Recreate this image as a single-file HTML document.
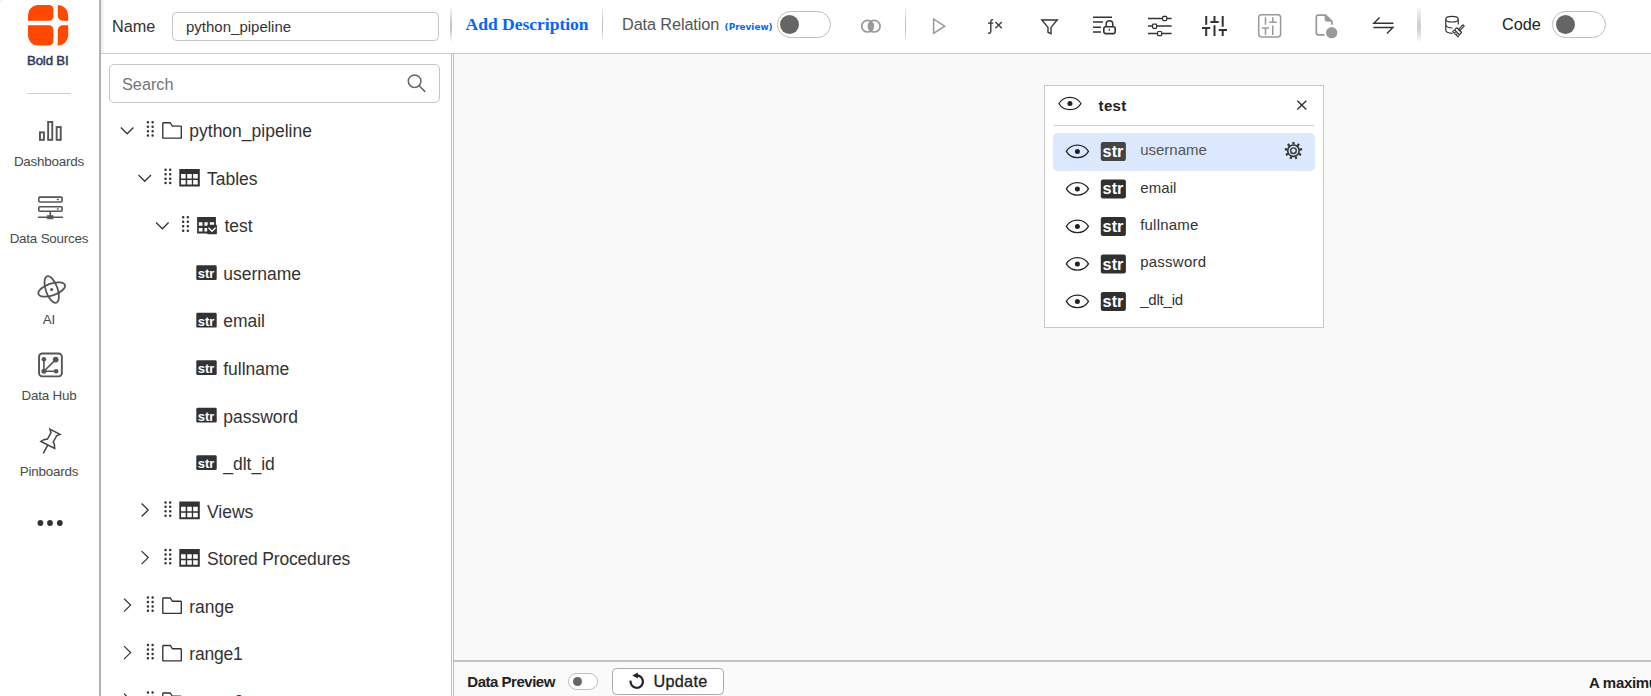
<!DOCTYPE html>
<html lang="en">
<head>
<meta charset="utf-8">
<title>Bold BI - Data Source Designer</title>
<style>
html,body{margin:0;padding:0;}
body{width:1651px;height:696px;overflow:hidden;position:relative;background:#fff;font-family:"Liberation Sans",sans-serif;color:#333;}
.abs{position:absolute;}
.t{position:absolute;white-space:nowrap;line-height:1;}
svg{position:absolute;overflow:visible;}
/* sidebar */
#sidebar{left:0;top:0;width:99px;height:696px;background:#fff;}
#sideborder{left:99px;top:0;width:2px;height:696px;background:#b2b2b2;}
#sideshadow{left:101px;top:0;width:4px;height:696px;background:linear-gradient(to right,#ececec,#fff);}
.navlbl{font-size:13.4px;color:#4a4a4a;text-align:center;width:98px;left:0;letter-spacing:-0.2px;}
/* toolbar */
#toolbar{left:101px;top:0;width:1550px;height:53px;}
#tbline{left:101px;top:53px;width:1550px;height:1px;background:#c9c9c9;}
.vdiv{width:1px;top:8px;height:35px;background:linear-gradient(to bottom,rgba(170,170,170,0.15),#bdbdbd 45%,#bdbdbd 60%,rgba(170,170,170,0));}
.toggle{border:1px solid #bdbdbd;border-radius:14px;background:#fff;box-sizing:border-box;}
.knob{border-radius:50%;background:#656565;}
/* tree */
#tree{left:101px;top:54px;width:350px;height:642px;background:#fff;overflow:hidden;}
.trow{font-size:17.5px;color:#333;}
.strb{font-size:13px;font-weight:bold;color:#fff;}
.cstr{font-size:16.25px;font-weight:bold;color:#fff;}
/* canvas */
#canvas{left:454px;top:54px;width:1197px;height:606px;background:#f9f9f9;}
#bottom{left:454px;top:662px;width:1197px;height:34px;background:#fafafa;}
</style>
</head>
<body>
<!-- ============ SIDEBAR ============ -->
<div id="sidebar" class="abs"></div>
<div id="sideborder" class="abs"></div>
<div id="sideshadow" class="abs"></div>
<div class="abs" style="left:0;top:0;width:4px;height:4px;background:linear-gradient(135deg,rgba(0,0,0,0) 12%,rgba(0,0,0,0.08) 32%,rgba(0,0,0,0) 52%);"></div>
<svg style="left:27.7px;top:5px;" width="41" height="41" viewBox="0 0 41 41">
 <g fill="#ff4800">
  <path d="M0,15.7 V10 A10,10 0 0 1 10,0 H21 A4.4,4.4 0 0 1 25.4,4.4 V11.3 A4.4,4.4 0 0 1 21,15.7 Z"/>
  <path d="M0,20.3 H21 A4.4,4.4 0 0 1 25.4,24.7 V36.2 A4.4,4.4 0 0 1 21,40.6 H10 A10,10 0 0 1 0,30.6 Z"/>
  <path d="M29.8,0 A10.4,10.4 0 0 1 40.2,10.4 V15.7 H34.8 A5,5 0 0 1 29.8,10.7 Z"/>
  <path d="M40.2,20.3 V30.2 A10.4,10.4 0 0 1 29.8,40.6 V25.3 A5,5 0 0 1 34.8,20.3 Z"/>
 </g>
</svg>
<div class="t" id="brand" style="left:0;width:95.5px;text-align:center;top:54px;font-size:13.2px;color:#2c3a5c;-webkit-text-stroke:0.5px #2c3a5c;letter-spacing:-0.15px;">Bold BI</div>
<div class="abs" style="left:27px;top:93px;width:44px;height:1px;background:#cfcfcf;"></div>

<svg style="left:0;top:0;" width="99" height="696" viewBox="0 0 99 696" fill="none" stroke="#555" stroke-width="1.8" stroke-linejoin="round" stroke-linecap="round">
 <!-- Dashboards -->
 <g stroke-width="1.9" stroke-linejoin="miter">
 <rect x="39.95" y="132.35" width="3.95" height="7.5"/>
 <rect x="48.15" y="121.95" width="4.1" height="17.9"/>
 <rect x="56.65" y="127.05" width="4.1" height="12.8"/>
 </g>
 <!-- Data Sources -->
 <g stroke-width="1.6">
 <rect x="38.8" y="197.1" width="23.3" height="4.9" rx="1"/>
 <rect x="38.8" y="206.8" width="23.3" height="4.4" rx="1"/>
 <path d="M38.5,217.2 H62.4 M50.3,212 V215"/>
 <rect x="47.6" y="215.6" width="5.4" height="3.2" fill="#555" stroke-width="0.8"/>
 <path d="M57.4,199.5 h0.8 M57.4,209 h0.8" stroke-width="1.4"/>
 </g>
 <!-- AI -->
 <g transform="translate(51.7,289.5)">
  <ellipse rx="14" ry="5.9" transform="rotate(-19)"/>
  <ellipse rx="14" ry="5.9" transform="rotate(71)"/>
  <circle r="1.6" fill="#555" stroke="none"/>
 </g>
 <!-- Data Hub -->
 <rect x="39.05" y="353.55" width="22.8" height="22.8" rx="3.2" stroke-width="1.9"/>
 <path d="M43.9,359.3 V371.2 H56.1 M43.9,371.2 L55.7,359.6" stroke-width="1.6"/>
 <g fill="#555" stroke="none"><circle cx="43.9" cy="359.3" r="2.3"/><circle cx="43.9" cy="371.2" r="2.5"/><circle cx="56.1" cy="371.3" r="2.3"/><circle cx="55.7" cy="359.6" r="2.9"/></g>
 <!-- Pinboards -->
 <path d="M49.9,429.1 L60,434.4 L56.8,435.5 L53.2,442.2 L54.3,443.8 L54.7,448.5 L40.9,441.4 L43.9,439.7 L47.5,439 L51,432.7 Z M47.7,445.2 L43.6,452.8" stroke-width="1.5" stroke="#444" stroke-linejoin="miter"/>
 <g fill="#333" stroke="none"><circle cx="40.4" cy="523" r="2.9"/><circle cx="50" cy="523" r="2.9"/><circle cx="59.8" cy="523" r="2.9"/></g>
</svg>
<div class="t navlbl" style="top:155px;">Dashboards</div>
<div class="t navlbl" style="top:232px;">Data Sources</div>
<div class="t navlbl" style="top:313px;">AI</div>
<div class="t navlbl" style="top:389px;">Data Hub</div>
<div class="t navlbl" style="top:465px;">Pinboards</div>


<!-- ============ TOOLBAR ============ -->
<div id="tbline" class="abs"></div>
<div class="t" id="lblName" style="left:112px;top:18px;font-size:16.25px;color:#333;">Name</div>
<div class="abs" style="left:172px;top:12px;width:267px;height:29px;box-sizing:border-box;border:1px solid #c6c6c6;border-radius:4.5px;background:#fff;"></div>
<div class="t" id="inpName" style="left:186px;top:19px;font-size:15px;color:#333;">python_pipeline</div>
<div class="abs vdiv" style="left:450px;width:2px;opacity:.85;"></div>
<div class="t" id="addDesc" style="left:465.6px;top:16px;font-family:'Liberation Serif',serif;font-weight:bold;font-size:17.5px;color:#0565ff;">Add Description</div>
<div class="abs vdiv" style="left:602px;"></div>
<div class="t" id="dataRel" style="left:622px;top:16px;font-size:16.25px;color:#555;letter-spacing:-0.1px;">Data Relation</div>
<div class="t" id="preview" style="left:724.6px;top:22.8px;font-family:'DejaVu Sans','Liberation Sans',sans-serif;font-weight:bold;font-size:8.9px;color:#0565ff;">(Preview)</div>
<div class="abs toggle" style="left:777px;top:11px;width:54px;height:27px;"></div>
<div class="abs knob" style="left:780px;top:15px;width:19px;height:19px;"></div>
<div class="abs vdiv" style="left:904.5px;"></div>
<div class="abs vdiv" style="left:1417px;width:4px;opacity:.7;"></div>
<div class="t" id="lblCode" style="left:1502px;top:15.5px;font-size:16.25px;color:#222;">Code</div>
<div class="abs toggle" style="left:1552px;top:11px;width:54px;height:27px;"></div>
<div class="abs knob" style="left:1555.5px;top:15px;width:19px;height:19px;"></div>

<svg style="left:840px;top:0;" width="811" height="53" viewBox="840 0 811 53" fill="none" stroke-linecap="butt" stroke-linejoin="miter">
 <!-- venn -->
 <g stroke="#999" stroke-width="1.4">
  <path d="M870.9,21.4 A5.85,5.85 0 0 1 870.9,31 A5.85,5.85 0 0 1 870.9,21.4 Z" fill="#999" stroke="none"/>
  <circle cx="867.55" cy="26.2" r="5.85" stroke-width="1.6"/><circle cx="874.25" cy="26.2" r="5.85" stroke-width="1.6"/>
 </g>
 <!-- play -->
 <path d="M933.6,19.2 V33.3 L944.7,26.2 Z" stroke="#999" stroke-width="1.5"/>
 <!-- fx -->
 <g stroke="#444" stroke-width="1.5">
  <path d="M993.2,19.9 Q990.9,19.2 990.8,22 V31 Q990.7,33.6 988,33.2"/>
  <path d="M988,23.1 H993.2"/>
  <path d="M995.4,22 L1001.8,28.2 M1001.8,22 L995.4,28.2"/>
 </g>
 <!-- filter -->
 <path d="M1041.8,20 H1057.2 L1051,27.4 V33.6 L1048,32.3 V27.4 Z" stroke="#333" stroke-width="1.4"/>
 <!-- list lock -->
 <g stroke="#333" stroke-width="1.5">
  <path d="M1093,17.2 H1112 M1093,22.1 H1103 M1093,27.2 H1101 M1093,32 H1101"/>
  <rect x="1103.8" y="26.8" width="11.4" height="6.8" rx="2" stroke-width="1.6" fill="#fff"/>
  <path d="M1106.2,26.6 V24.2 A3.3,3.4 0 0 1 1112.8,24.2 V26.6" stroke-width="1.5"/>
  <path d="M1109.3,28.8 V30.8" stroke-width="1.3"/>
 </g>
 <!-- sliders -->
 <g stroke="#333" stroke-width="1.5">
  <path d="M1148,18.6 H1171.6 M1148,26.1 H1171.6 M1148,33.6 H1171.6"/>
  <g fill="#fff" stroke-width="1.2"><rect x="1162.7" y="16.4" width="4" height="4.2" rx="0.8"/><rect x="1152.6" y="24.1" width="4" height="4.2" rx="0.8"/><rect x="1157.6" y="31.5" width="4" height="4.2" rx="0.8"/></g>
 </g>
 <!-- vertical sliders -->
 <g stroke="#333" stroke-width="2">
  <path d="M1206.2,16 V24.7 M1206.2,28 V36 M1202,28 H1210.2"/>
  <path d="M1214.5,16 V22 M1210.3,22 H1218.7 M1214.5,25.2 V36"/>
  <path d="M1222.7,16 V26.7 M1222.7,30 V36 M1218.7,30 H1227"/>
 </g>
 <!-- boxed sliders (disabled) -->
 <g stroke="#999" stroke-width="1.5">
  <rect x="1258.7" y="14.8" width="21.9" height="22.1" rx="2.8"/>
  <path d="M1265.5,17.3 V24.7 M1265.5,28 V35 M1262,28 H1269"/>
  <path d="M1272.8,17.3 V22.3 M1269.3,22.3 H1276.6 M1272.8,25.6 V35"/>
 </g>
 <!-- file with dot -->
 <g stroke="#999" stroke-width="1.7">
  <path d="M1324.6,34.8 H1318.3 A2,2 0 0 1 1316.3,32.8 V17.2 A2,2 0 0 1 1318.3,15.2 H1325.6 L1331.9,21.4 V24.8"/>
  <path d="M1325,15.4 V19.4 A1.8,1.8 0 0 0 1326.8,21.2 H1331.6 Z" fill="#999" stroke-width="0.8"/>
  <circle cx="1331.65" cy="32.65" r="5.65" fill="#999" stroke="none"/>
 </g>
 <!-- swap -->
 <g stroke="#333" stroke-width="1.4">
  <path d="M1379.6,17.4 L1373.8,23.3 H1393.4"/>
  <path d="M1373.4,27.45 H1392.9 L1387,33.4"/>
 </g>
 <!-- db brush -->
 <g stroke="#333" stroke-width="1.2">
  <ellipse cx="1452" cy="19.2" rx="6.2" ry="2.8"/>
  <path d="M1445.8,19.2 V30.6 C1445.8,32.2 1449,33.2 1452.6,33.3"/>
  <path d="M1445.8,25 C1446,26.6 1449,27.8 1452.6,28"/>
  <path d="M1458.2,19.2 V24.6"/>
  <g transform="translate(1459.2,30) rotate(-46)">
   <rect x="-0.2" y="-0.9" width="6.6" height="1.8" rx="0.6"/>
   <rect x="-3.2" y="-3.4" width="3.2" height="6.8" rx="0.5"/>
   <path d="M-3.2,-3.4 L-5.6,-3.6 L-5.8,3.9 L-3.2,3.4 M-5.6,-1.2 H-3.6 M-5.6,1.2 H-3.6" stroke-width="1"/>
  </g>
 </g>
</svg>


<!-- ============ TREE ============ -->
<div id="tree" class="abs"></div>
<div class="abs" style="left:109px;top:64px;width:331px;height:39px;box-sizing:border-box;border:1px solid #c6c6c6;border-radius:5px;background:#fff;"></div>
<div class="t" id="search" style="left:122px;top:75.5px;font-size:16.25px;color:#757575;">Search</div>
<svg style="left:400px;top:70px;" width="30" height="26" viewBox="400 70 30 26" fill="none" stroke="#666" stroke-width="1.5"><circle cx="414.6" cy="81.2" r="6.3"/><path d="M419.2,85.8 L424.8,91.4" stroke-linecap="round"/></svg>
<div class="abs" style="left:101px;top:54px;width:350px;height:642px;overflow:hidden;">
<svg style="left:-101px;top:-54px;" width="451" height="750" viewBox="0 0 451 750">
<path d="M120.9,127.5 l6.25,6.25 l6.25,-6.25" stroke="#333" stroke-width="1.25" fill="none"/>
<path d="M146.7,122.3 a1.25,1.25 0 1 0 2.5,0 a1.25,1.25 0 1 0 -2.5,0 M151.36,122.3 a1.25,1.25 0 1 0 2.5,0 a1.25,1.25 0 1 0 -2.5,0 M146.7,126.7 a1.25,1.25 0 1 0 2.5,0 a1.25,1.25 0 1 0 -2.5,0 M151.36,126.7 a1.25,1.25 0 1 0 2.5,0 a1.25,1.25 0 1 0 -2.5,0 M146.7,131.2 a1.25,1.25 0 1 0 2.5,0 a1.25,1.25 0 1 0 -2.5,0 M151.36,131.2 a1.25,1.25 0 1 0 2.5,0 a1.25,1.25 0 1 0 -2.5,0 M146.7,135.6 a1.25,1.25 0 1 0 2.5,0 a1.25,1.25 0 1 0 -2.5,0 M151.36,135.6 a1.25,1.25 0 1 0 2.5,0 a1.25,1.25 0 1 0 -2.5,0" fill="#333"/>
<path d="M162.8,138.15 V123.45 q0,-0.7 0.7,-0.7 h6.8 l2,3.3 h8.2 q0.8,0 0.8,0.8 V138.15 Z" stroke="#333" stroke-width="1.35" fill="none" stroke-linejoin="round"/>
<path d="M138.5,175.02 l6.25,6.25 l6.25,-6.25" stroke="#333" stroke-width="1.25" fill="none"/>
<path d="M164.3,169.82 a1.25,1.25 0 1 0 2.5,0 a1.25,1.25 0 1 0 -2.5,0 M168.96,169.82 a1.25,1.25 0 1 0 2.5,0 a1.25,1.25 0 1 0 -2.5,0 M164.3,174.22 a1.25,1.25 0 1 0 2.5,0 a1.25,1.25 0 1 0 -2.5,0 M168.96,174.22 a1.25,1.25 0 1 0 2.5,0 a1.25,1.25 0 1 0 -2.5,0 M164.3,178.72 a1.25,1.25 0 1 0 2.5,0 a1.25,1.25 0 1 0 -2.5,0 M168.96,178.72 a1.25,1.25 0 1 0 2.5,0 a1.25,1.25 0 1 0 -2.5,0 M164.3,183.12 a1.25,1.25 0 1 0 2.5,0 a1.25,1.25 0 1 0 -2.5,0 M168.96,183.12 a1.25,1.25 0 1 0 2.5,0 a1.25,1.25 0 1 0 -2.5,0" fill="#333"/>
<path d="M179.3,168.92 h20.5 v17.6 h-20.5 Z M181.05,174.07 v4.5 h4.6 v-4.5 Z M187.2,174.07 v4.5 h4.6 v-4.5 Z M193.15,174.07 v4.5 h4.6 v-4.5 Z M181.05,180.12 v4.5 h4.6 v-4.5 Z M187.2,180.12 v4.5 h4.6 v-4.5 Z M193.15,180.12 v4.5 h4.6 v-4.5 Z" fill="#333" fill-rule="evenodd"/>
<path d="M156.1,222.54 l6.25,6.25 l6.25,-6.25" stroke="#333" stroke-width="1.25" fill="none"/>
<path d="M181.9,217.34 a1.25,1.25 0 1 0 2.5,0 a1.25,1.25 0 1 0 -2.5,0 M186.56,217.34 a1.25,1.25 0 1 0 2.5,0 a1.25,1.25 0 1 0 -2.5,0 M181.9,221.74 a1.25,1.25 0 1 0 2.5,0 a1.25,1.25 0 1 0 -2.5,0 M186.56,221.74 a1.25,1.25 0 1 0 2.5,0 a1.25,1.25 0 1 0 -2.5,0 M181.9,226.24 a1.25,1.25 0 1 0 2.5,0 a1.25,1.25 0 1 0 -2.5,0 M186.56,226.24 a1.25,1.25 0 1 0 2.5,0 a1.25,1.25 0 1 0 -2.5,0 M181.9,230.64 a1.25,1.25 0 1 0 2.5,0 a1.25,1.25 0 1 0 -2.5,0 M186.56,230.64 a1.25,1.25 0 1 0 2.5,0 a1.25,1.25 0 1 0 -2.5,0" fill="#333"/>
<path d="M197.1,216.99 h18.8 v16.4 h-18.8 Z M198.8,222.19 v3.6 h3.7 v-3.6 Z M204.4,222.19 v3.6 h3.3 v-3.6 Z M209.8,222.19 v3.6 h4.3 v-3.6 Z M198.8,227.99 v3.4 h3.7 v-3.4 Z M204.4,227.99 v3.4 h3.3 v-3.4 Z M209.8,227.99 v3.4 h4.3 v-3.4 Z" fill="#333" fill-rule="evenodd"/>
<rect x="207.2" y="224.84" width="9.7" height="9.5" rx="0.8" fill="#333"/>
<path d="M208.5,227.84 l3.5,3.4 l3.6,-3.4" stroke="#fff" stroke-width="1.3" fill="none"/>
<rect x="196.3" y="265.21" width="20.4" height="14.8" rx="1.3" fill="#333"/>
<rect x="196.3" y="312.73" width="20.4" height="14.8" rx="1.3" fill="#333"/>
<rect x="196.3" y="360.25" width="20.4" height="14.8" rx="1.3" fill="#333"/>
<rect x="196.3" y="407.77" width="20.4" height="14.8" rx="1.3" fill="#333"/>
<rect x="196.3" y="455.29" width="20.4" height="14.8" rx="1.3" fill="#333"/>
<path d="M141.6,503.56 l6.6,6.5 l-6.6,6.5" stroke="#333" stroke-width="1.25" fill="none"/>
<path d="M164.3,502.46 a1.25,1.25 0 1 0 2.5,0 a1.25,1.25 0 1 0 -2.5,0 M168.96,502.46 a1.25,1.25 0 1 0 2.5,0 a1.25,1.25 0 1 0 -2.5,0 M164.3,506.86 a1.25,1.25 0 1 0 2.5,0 a1.25,1.25 0 1 0 -2.5,0 M168.96,506.86 a1.25,1.25 0 1 0 2.5,0 a1.25,1.25 0 1 0 -2.5,0 M164.3,511.36 a1.25,1.25 0 1 0 2.5,0 a1.25,1.25 0 1 0 -2.5,0 M168.96,511.36 a1.25,1.25 0 1 0 2.5,0 a1.25,1.25 0 1 0 -2.5,0 M164.3,515.76 a1.25,1.25 0 1 0 2.5,0 a1.25,1.25 0 1 0 -2.5,0 M168.96,515.76 a1.25,1.25 0 1 0 2.5,0 a1.25,1.25 0 1 0 -2.5,0" fill="#333"/>
<path d="M179.3,501.56 h20.5 v17.6 h-20.5 Z M181.05,506.71 v4.5 h4.6 v-4.5 Z M187.2,506.71 v4.5 h4.6 v-4.5 Z M193.15,506.71 v4.5 h4.6 v-4.5 Z M181.05,512.76 v4.5 h4.6 v-4.5 Z M187.2,512.76 v4.5 h4.6 v-4.5 Z M193.15,512.76 v4.5 h4.6 v-4.5 Z" fill="#333" fill-rule="evenodd"/>
<path d="M141.6,551.08 l6.6,6.5 l-6.6,6.5" stroke="#333" stroke-width="1.25" fill="none"/>
<path d="M164.3,549.98 a1.25,1.25 0 1 0 2.5,0 a1.25,1.25 0 1 0 -2.5,0 M168.96,549.98 a1.25,1.25 0 1 0 2.5,0 a1.25,1.25 0 1 0 -2.5,0 M164.3,554.38 a1.25,1.25 0 1 0 2.5,0 a1.25,1.25 0 1 0 -2.5,0 M168.96,554.38 a1.25,1.25 0 1 0 2.5,0 a1.25,1.25 0 1 0 -2.5,0 M164.3,558.88 a1.25,1.25 0 1 0 2.5,0 a1.25,1.25 0 1 0 -2.5,0 M168.96,558.88 a1.25,1.25 0 1 0 2.5,0 a1.25,1.25 0 1 0 -2.5,0 M164.3,563.28 a1.25,1.25 0 1 0 2.5,0 a1.25,1.25 0 1 0 -2.5,0 M168.96,563.28 a1.25,1.25 0 1 0 2.5,0 a1.25,1.25 0 1 0 -2.5,0" fill="#333"/>
<path d="M179.3,549.08 h20.5 v17.6 h-20.5 Z M181.05,554.23 v4.5 h4.6 v-4.5 Z M187.2,554.23 v4.5 h4.6 v-4.5 Z M193.15,554.23 v4.5 h4.6 v-4.5 Z M181.05,560.28 v4.5 h4.6 v-4.5 Z M187.2,560.28 v4.5 h4.6 v-4.5 Z M193.15,560.28 v4.5 h4.6 v-4.5 Z" fill="#333" fill-rule="evenodd"/>
<path d="M124,598.6 l6.6,6.5 l-6.6,6.5" stroke="#333" stroke-width="1.25" fill="none"/>
<path d="M146.7,597.5 a1.25,1.25 0 1 0 2.5,0 a1.25,1.25 0 1 0 -2.5,0 M151.36,597.5 a1.25,1.25 0 1 0 2.5,0 a1.25,1.25 0 1 0 -2.5,0 M146.7,601.9 a1.25,1.25 0 1 0 2.5,0 a1.25,1.25 0 1 0 -2.5,0 M151.36,601.9 a1.25,1.25 0 1 0 2.5,0 a1.25,1.25 0 1 0 -2.5,0 M146.7,606.4 a1.25,1.25 0 1 0 2.5,0 a1.25,1.25 0 1 0 -2.5,0 M151.36,606.4 a1.25,1.25 0 1 0 2.5,0 a1.25,1.25 0 1 0 -2.5,0 M146.7,610.8 a1.25,1.25 0 1 0 2.5,0 a1.25,1.25 0 1 0 -2.5,0 M151.36,610.8 a1.25,1.25 0 1 0 2.5,0 a1.25,1.25 0 1 0 -2.5,0" fill="#333"/>
<path d="M162.8,613.35 V598.65 q0,-0.7 0.7,-0.7 h6.8 l2,3.3 h8.2 q0.8,0 0.8,0.8 V613.35 Z" stroke="#333" stroke-width="1.35" fill="none" stroke-linejoin="round"/>
<path d="M124,646.12 l6.6,6.5 l-6.6,6.5" stroke="#333" stroke-width="1.25" fill="none"/>
<path d="M146.7,645.02 a1.25,1.25 0 1 0 2.5,0 a1.25,1.25 0 1 0 -2.5,0 M151.36,645.02 a1.25,1.25 0 1 0 2.5,0 a1.25,1.25 0 1 0 -2.5,0 M146.7,649.42 a1.25,1.25 0 1 0 2.5,0 a1.25,1.25 0 1 0 -2.5,0 M151.36,649.42 a1.25,1.25 0 1 0 2.5,0 a1.25,1.25 0 1 0 -2.5,0 M146.7,653.92 a1.25,1.25 0 1 0 2.5,0 a1.25,1.25 0 1 0 -2.5,0 M151.36,653.92 a1.25,1.25 0 1 0 2.5,0 a1.25,1.25 0 1 0 -2.5,0 M146.7,658.32 a1.25,1.25 0 1 0 2.5,0 a1.25,1.25 0 1 0 -2.5,0 M151.36,658.32 a1.25,1.25 0 1 0 2.5,0 a1.25,1.25 0 1 0 -2.5,0" fill="#333"/>
<path d="M162.8,660.87 V646.17 q0,-0.7 0.7,-0.7 h6.8 l2,3.3 h8.2 q0.8,0 0.8,0.8 V660.87 Z" stroke="#333" stroke-width="1.35" fill="none" stroke-linejoin="round"/>
<path d="M124,693.64 l6.6,6.5 l-6.6,6.5" stroke="#333" stroke-width="1.25" fill="none"/>
<path d="M146.7,692.54 a1.25,1.25 0 1 0 2.5,0 a1.25,1.25 0 1 0 -2.5,0 M151.36,692.54 a1.25,1.25 0 1 0 2.5,0 a1.25,1.25 0 1 0 -2.5,0 M146.7,696.94 a1.25,1.25 0 1 0 2.5,0 a1.25,1.25 0 1 0 -2.5,0 M151.36,696.94 a1.25,1.25 0 1 0 2.5,0 a1.25,1.25 0 1 0 -2.5,0 M146.7,701.44 a1.25,1.25 0 1 0 2.5,0 a1.25,1.25 0 1 0 -2.5,0 M151.36,701.44 a1.25,1.25 0 1 0 2.5,0 a1.25,1.25 0 1 0 -2.5,0 M146.7,705.84 a1.25,1.25 0 1 0 2.5,0 a1.25,1.25 0 1 0 -2.5,0 M151.36,705.84 a1.25,1.25 0 1 0 2.5,0 a1.25,1.25 0 1 0 -2.5,0" fill="#333"/>
<path d="M162.8,708.39 V693.69 q0,-0.7 0.7,-0.7 h6.8 l2,3.3 h8.2 q0.8,0 0.8,0.8 V708.39 Z" stroke="#333" stroke-width="1.35" fill="none" stroke-linejoin="round"/>
</svg>
<div class="abs" style="left:-101px;top:-54px;">
<div class="t trow" style="left:189.3px;top:123px;">python_pipeline</div>
<div class="t trow" style="left:207px;top:171px;">Tables</div>
<div class="t trow" style="left:224.5px;top:218px;">test</div>
<div class="t strb" style="left:197.7px;top:267px;">str</div>
<div class="t trow" style="left:223.2px;top:266px;">username</div>
<div class="t strb" style="left:197.7px;top:315px;">str</div>
<div class="t trow" style="left:223.2px;top:313px;">email</div>
<div class="t strb" style="left:197.7px;top:362px;">str</div>
<div class="t trow" style="left:223.2px;top:361px;">fullname</div>
<div class="t strb" style="left:197.7px;top:410px;">str</div>
<div class="t trow" style="left:223.2px;top:409px;">password</div>
<div class="t strb" style="left:197.7px;top:457px;">str</div>
<div class="t trow" style="left:223.2px;top:456px;">_dlt_id</div>
<div class="t trow" style="left:207px;top:504px;">Views</div>
<div class="t trow" style="left:207px;top:551px;letter-spacing:-0.17px;">Stored Procedures</div>
<div class="t trow" style="left:189.3px;top:599px;">range</div>
<div class="t trow" style="left:189.3px;top:646px;letter-spacing:-0.2px;">range1</div>
<div class="t trow" style="left:189.3px;top:694px;">range2</div>
</div></div>


<!-- ============ CANVAS ============ -->
<div id="canvas" class="abs"></div>
<div class="abs" style="left:451px;top:54px;width:1px;height:642px;background:#bdbdbd;"></div>
<div class="abs" style="left:453px;top:54px;width:1px;height:642px;background:#bdbdbd;"></div>
<div class="abs" style="left:1044px;top:85px;width:280px;height:243px;box-sizing:border-box;border:1px solid #c8c8c8;background:#fff;"></div>
<div class="abs" style="left:1054px;top:125px;width:260px;height:1px;background:#cfcfcf;"></div>
<div class="abs" style="left:1053px;top:133px;width:262px;height:37.6px;border-radius:5px;background:#dce8fd;"></div>
<svg style="left:1044px;top:85px;" width="280" height="243" viewBox="1044 85 280 243">
<path d="M1058.85,103.5 A13,13 0 0 1 1081.05,103.5 A13,13 0 0 1 1058.85,103.5 Z" fill="none" stroke="#222" stroke-width="1.25" stroke-linejoin="round"/><circle cx="1069.95" cy="103.5" r="2.5" fill="#222"/>
<path d="M1297.3,100.7 L1306.3,109.6 M1306.3,100.7 L1297.3,109.6" stroke="#333" stroke-width="1.4" fill="none"/>
<path d="M1066.3,151.4 A13,13 0 0 1 1088.5,151.4 A13,13 0 0 1 1066.3,151.4 Z" fill="none" stroke="#222" stroke-width="1.25" stroke-linejoin="round"/><circle cx="1077.4" cy="151.4" r="2.5" fill="#222"/>
<rect x="1100.8" y="142" width="25.1" height="18.9" rx="2.2" fill="#444"/>
<path d="M1066.3,188.9 A13,13 0 0 1 1088.5,188.9 A13,13 0 0 1 1066.3,188.9 Z" fill="none" stroke="#222" stroke-width="1.25" stroke-linejoin="round"/><circle cx="1077.4" cy="188.9" r="2.5" fill="#222"/>
<rect x="1100.8" y="179.5" width="25.1" height="18.9" rx="2.2" fill="#303030"/>
<path d="M1066.3,226.4 A13,13 0 0 1 1088.5,226.4 A13,13 0 0 1 1066.3,226.4 Z" fill="none" stroke="#222" stroke-width="1.25" stroke-linejoin="round"/><circle cx="1077.4" cy="226.4" r="2.5" fill="#222"/>
<rect x="1100.8" y="217" width="25.1" height="18.9" rx="2.2" fill="#303030"/>
<path d="M1066.3,263.9 A13,13 0 0 1 1088.5,263.9 A13,13 0 0 1 1066.3,263.9 Z" fill="none" stroke="#222" stroke-width="1.25" stroke-linejoin="round"/><circle cx="1077.4" cy="263.9" r="2.5" fill="#222"/>
<rect x="1100.8" y="254.5" width="25.1" height="18.9" rx="2.2" fill="#303030"/>
<path d="M1066.3,301.4 A13,13 0 0 1 1088.5,301.4 A13,13 0 0 1 1066.3,301.4 Z" fill="none" stroke="#222" stroke-width="1.25" stroke-linejoin="round"/><circle cx="1077.4" cy="301.4" r="2.5" fill="#222"/>
<rect x="1100.8" y="292" width="25.1" height="18.9" rx="2.2" fill="#303030"/>
<g stroke="#333" fill="none"><circle cx="1293.45" cy="150.7" r="5.7" stroke-width="1.6"/><circle cx="1293.45" cy="150.7" r="2.8" stroke-width="1.4"/><path d="M1293.45,144.5 L1293.45,142 M1297.44,145.95 L1299.04,144.04 M1299.56,149.62 L1302.02,149.19 M1298.82,153.8 L1300.98,155.05 M1295.57,156.53 L1296.43,158.88 M1291.33,156.53 L1290.47,158.88 M1288.08,153.8 L1285.92,155.05 M1287.34,149.62 L1284.88,149.19 M1289.46,145.95 L1287.86,144.04" stroke-width="2.2"/></g>
</svg>
<div class="t" id="cardTitle" style="left:1098.6px;top:98px;font-size:15px;font-weight:bold;color:#222;letter-spacing:0.3px;">test</div>
<div class="t cstr" style="left:1102.6px;top:143px;">str</div>
<div class="t" style="left:1140.2px;top:142px;font-size:15px;color:#555;letter-spacing:0px;">username</div>
<div class="t cstr" style="left:1102.6px;top:180px;">str</div>
<div class="t" style="left:1140.2px;top:180px;font-size:15px;color:#333;letter-spacing:0.1px;">email</div>
<div class="t cstr" style="left:1102.6px;top:218px;">str</div>
<div class="t" style="left:1140.2px;top:217px;font-size:15px;color:#333;letter-spacing:0.2px;">fullname</div>
<div class="t cstr" style="left:1102.6px;top:256px;">str</div>
<div class="t" style="left:1140.2px;top:254px;font-size:15px;color:#333;letter-spacing:0.25px;">password</div>
<div class="t cstr" style="left:1102.6px;top:293px;">str</div>
<div class="t" style="left:1140.2px;top:292px;font-size:15px;color:#333;letter-spacing:-0.2px;">_dlt_id</div>


<!-- ============ BOTTOM BAR ============ -->
<div id="bottom" class="abs"></div>
<div class="abs" style="left:454px;top:660px;width:1197px;height:2px;background:#c4c4c4;"></div>
<div class="t" id="dataPrev" style="left:467.3px;top:674px;font-size:15px;font-weight:bold;color:#222;letter-spacing:-0.48px;">Data Preview</div>
<div class="abs toggle" style="left:568px;top:673px;width:30px;height:17px;border-radius:9px;"></div>
<div class="abs knob" style="left:572.9px;top:676.7px;width:9.3px;height:9.3px;"></div>
<div class="abs" style="left:612px;top:668px;width:112px;height:27px;box-sizing:border-box;border:1px solid #ababab;border-radius:4.5px;background:#fff;"></div>
<svg style="left:625px;top:668px;" width="26" height="27" viewBox="625 668 26 27" fill="none">
 <path d="M636.7,675.4 A6.2,6.2 0 1 1 630.6,680.6" stroke="#222" stroke-width="2.2"/>
 <path d="M632.4,675.5 L637.9,672.4 V678.6 Z" fill="#222"/>
</svg>
<div class="t" id="updTxt" style="left:653.4px;top:672.5px;font-size:16.25px;color:#222;-webkit-text-stroke:0.3px #222;letter-spacing:0.3px;">Update</div>
<div class="t" id="amax" style="left:1589px;top:675px;font-size:15px;font-weight:bold;color:#222;letter-spacing:-0.3px;">A maximum</div>

</body>
</html>
